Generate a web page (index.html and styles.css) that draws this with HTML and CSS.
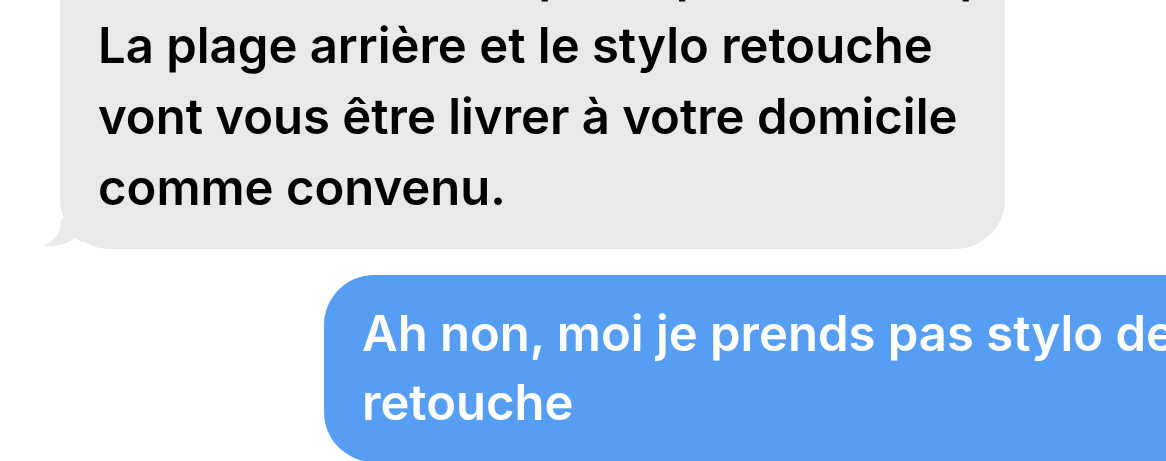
FILE: index.html
```html
<!DOCTYPE html>
<html lang="fr">
  <head>
    <meta charset="UTF-8" />
    <meta name="viewport" content="width=device-width, initial-scale=1.0" />
    <title>Messages</title>
    <link rel="stylesheet" href="styles.css">
  </head>
  <body>
    <div class="thread">
      <div class="bubble bubble_in">
        <p class="bubble_text">
          Je vous confirme que la pièce est expédiée.<br />
          La plage arrière et le stylo retouche<br />
          vont vous être livrer à votre domicile<br />
          comme convenu.
        </p>
        <svg class="tail" width="40" height="30" viewBox="0 0 40 30">
          <path d="M18 0 C18 14 12 22 0 27 C10 28 22 26 32 19 L40 24 L40 0 Z" fill="#e9e9eb" />
        </svg>
      </div>
      <div class="bubble bubble_out">
        <p class="bubble_text">
          Ah non, moi je prends pas stylo de<br />
          retouche
        </p>
      </div>
    </div>
  </body>
</html>
```

FILE: styles.css
```css
html,
body {
  margin: 0;
  height: 100%;
  overflow: hidden;
  background-color: #fff;
}
.thread {
  display: flex;
  flex-direction: column;
  row-gap: 26px;
  font-family: Inter, "Noto Sans", sans-serif;
  font-weight: 600;
}
.bubble {
  position: relative;
  border-radius: 50px;
}
.bubble_text {
  margin: 0;
  font-size: 49px;
  line-height: 71px;
  white-space: nowrap;
}
.bubble_in {
  margin-left: 60px;
  margin-top: -85px;
  width: 945px;
  padding: 24px 0 26px 38px;
  box-sizing: border-box;
  background-color: #e9e9eb;
  color: #000;
}
.bubble_out {
  margin-left: 324px;
  width: 960px;
  padding: 24px 0 25px 38px;
  box-sizing: border-box;
  background-color: #559ef3;
  color: #fff;
}
.bubble_out .bubble_text {
  line-height: 69px;
}
.tail {
  position: absolute;
  left: -17px;
  bottom: 0;
}
```
